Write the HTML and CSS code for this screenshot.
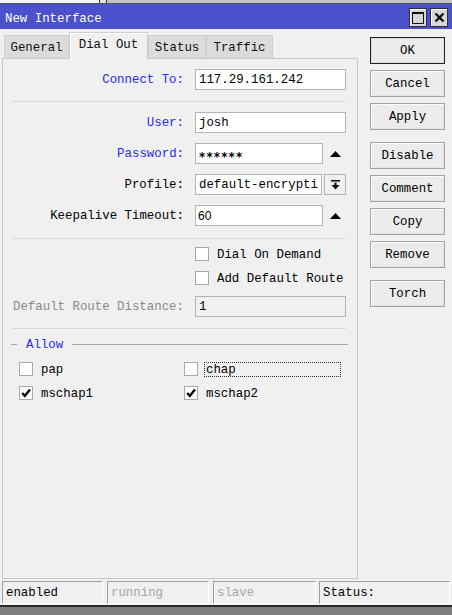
FILE: index.html
```html
<!DOCTYPE html>
<html>
<head>
<meta charset="utf-8">
<title>New Interface</title>
<link rel="stylesheet" href="styles.css">
</head>
<body>
<div class="topstrip"><div class="ts-a"></div><div class="ts-b"></div><div class="ts-c"></div></div>
<div class="titlebar">
  <span class="title">New Interface</span>
  <div class="tbtns">
    <div class="tbtn"><span class="sq"></span></div>
    <div class="tbtn"><svg width="11" height="11" viewBox="0 0 11 11"><path d="M1.5 1.5 L9.5 9.5 M9.5 1.5 L1.5 9.5" stroke="#111" stroke-width="2.4"/></svg></div>
  </div>
</div>
<div class="main">
  <div class="left">
    <div class="tabs">
      <div class="tab t-general">General</div>
      <div class="tab active">Dial Out</div>
      <div class="tab t-status">Status</div>
      <div class="tab t-traffic">Traffic</div>
    </div>
    <div class="panel">
      <div class="row r-connect"><div class="lbl blue">Connect To:</div><div class="input w-full">117.29.161.242</div></div>
      <div class="sep sep1"></div>
      <div class="row r-user"><div class="lbl blue">User:</div><div class="input w-full">josh</div></div>
      <div class="row r-pass"><div class="lbl blue">Password:</div>
        <div class="field"><div class="input w-short"><span class="stars">******</span></div><svg class="tri" width="11" height="6" viewBox="0 0 11 6"><polygon points="5.5,0 11,6 0,6" fill="#000"/></svg></div></div>
      <div class="row r-profile"><div class="lbl">Profile:</div>
        <div class="field"><div class="input w-prof">default-encrypti</div><div class="ddbtn"><svg width="9" height="10" viewBox="0 0 9 10"><rect x="0" y="0" width="9" height="1.6" fill="#111"/><rect x="3.4" y="2.6" width="2.2" height="3" fill="#111"/><polygon points="0.5,5 8.5,5 4.5,9.5" fill="#111"/></svg></div></div></div>
      <div class="row r-keep"><div class="lbl">Keepalive Timeout:</div>
        <div class="field"><div class="input w-short sans">60</div><svg class="tri" width="11" height="6" viewBox="0 0 11 6"><polygon points="5.5,0 11,6 0,6" fill="#000"/></svg></div></div>
      <div class="sep sep2"></div>
      <div class="row cbrow r-dial"><div></div><div class="cbitem"><span class="cb"></span><span class="cbtext">Dial On Demand</span></div></div>
      <div class="row cbrow r-adr"><div></div><div class="cbitem"><span class="cb"></span><span class="cbtext">Add Default Route</span></div></div>
      <div class="row r-dist"><div class="lbl gray">Default Route Distance:</div><div class="input w-full disabled">1</div></div>
      <div class="sep sep3"></div>
      <div class="legend"><span class="lg-short"></span><span class="lg-text">Allow</span><span class="lg-line"></span></div>
      <div class="allow">
        <div class="cbitem"><span class="cb"></span><span class="cbtext">pap</span></div>
        <div class="cbitem"><span class="cb"></span><span class="cbtext focus">chap</span></div>
        <div class="cbitem"><span class="cb"><svg width="12" height="12" viewBox="0 0 12 12"><path d="M2.2 6 L4.8 9 L10 2.5" fill="none" stroke="#000" stroke-width="2.4"/></svg></span><span class="cbtext">mschap1</span></div>
        <div class="cbitem"><span class="cb"><svg width="12" height="12" viewBox="0 0 12 12"><path d="M2.2 6 L4.8 9 L10 2.5" fill="none" stroke="#000" stroke-width="2.4"/></svg></span><span class="cbtext">mschap2</span></div>
      </div>
    </div>
  </div>
  <div class="buttons">
    <div class="btn default">OK</div>
    <div class="btn">Cancel</div>
    <div class="btn">Apply</div>
    <div class="btn group">Disable</div>
    <div class="btn">Comment</div>
    <div class="btn">Copy</div>
    <div class="btn">Remove</div>
    <div class="btn group">Torch</div>
  </div>
</div>
<div class="statusbar">
  <div class="cell c1">enabled</div>
  <div class="cell c2 dim">running</div>
  <div class="cell c3 dim">slave</div>
  <div class="cell c4">Status:</div>
</div>
<div class="bottomstrip"></div>
</body>
</html>
```

FILE: styles.css
```css
* { box-sizing: border-box; }
html, body { margin: 0; padding: 0; }
body {
  width: 452px;
  height: 615px;
  overflow: hidden;
  background: #f0f0f0;
  font-family: "Liberation Mono", "DejaVu Sans Mono", monospace;
  font-size: 12.4px;
  color: #000;
  display: flex;
  flex-direction: column;
}

/* strip of window behind */
.topstrip { height: 4px; display: flex; background: #cfcfcf; border-bottom: 1px solid #555; }
.ts-a { width: 100px; background: #f6f6f6; border-right: 1px solid #333; }
.ts-b { width: 7px; background: #e2e2e2; border-right: 1px solid #333; }
.ts-c { flex: 1; background: #c4c4c4; }

.titlebar {
  height: 25px;
  background: #4b50cd;
  display: flex;
  align-items: center;
  justify-content: space-between;
  padding: 0 4px 0 5px;
}
.title { color: #fff; padding-top: 4px; }
.tbtns { display: flex; gap: 3px; padding-top: 2px; }
.tbtn {
  width: 18px; height: 19px;
  background: #d8d8d8;
  border: 1px solid #303030;
  box-shadow: inset 1px 1px 0 #fff;
  display: flex; align-items: center; justify-content: center;
}
.sq { width: 12px; height: 12px; border: 1px solid #111; border-top-width: 2px; }

.main { flex: 1; display: flex; min-height: 0; }
.left { width: 356px; margin-left: 2px; display: flex; flex-direction: column; }

.tabs { height: 29px; display: flex; align-items: flex-end; padding-left: 2px; position: relative; z-index: 1; }
.tab {
  height: 23px;
  background: #dcdcdc;
  border: 1px solid #cfcfcf;
  border-bottom: none;
  display: flex; align-items: center; justify-content: center;
  color: #111;
  padding-top: 1px;
}
.t-general { width: 65px; }
.t-status { width: 58px; }
.t-traffic { width: 67px; }
.tab.active {
  width: 79px;
  height: 27px;
  margin-bottom: -1px;
  background: #f0f0f0;
  border-color: #d0d0d0;
  box-shadow: inset 1px 1px 0 #fff;
  padding-top: 0;
  padding-bottom: 3px;
}

.panel {
  flex: 1;
  border: 1px solid #c9c9c9;
  background: #f0f0f0;
  display: flex;
  flex-direction: column;
}

.row {
  display: grid;
  grid-template-columns: 181px 151px;
  column-gap: 11px;
  align-items: center;
  height: 21px;
}
.lbl { text-align: right; white-space: nowrap; padding-top: 1px; }
.blue { color: #2a2af2; }
.gray { color: #8a8a8a; }

.r-connect { margin-top: 10px; }
.r-user { margin-top: 10px; }
.r-pass { margin-top: 10px; }
.r-profile { margin-top: 10px; }
.r-keep { margin-top: 10px; }
.cbrow { height: 14px; }
.r-dial { margin-top: 8px; }
.r-adr { margin-top: 10px; }
.r-dist { margin-top: 11px; }

.sep { height: 1px; background: #d9d9d9; margin-left: 9px; width: 334px; }
.sep1 { margin-top: 11px; }
.sep2 { margin-top: 12px; }
.sep3 { margin-top: 11px; }

.input {
  height: 21px;
  background: #fff;
  border: 1px solid #b4b4b4;
  padding-left: 3px;
  padding-top: 1px;
  display: flex;
  align-items: center;
  white-space: nowrap;
  overflow: hidden;
}
.w-full { width: 151px; }
.w-short { width: 128px; }
.w-prof { width: 127px; }
.disabled { background: #f0f0f0; }
.stars {
  font-family: "DejaVu Sans", sans-serif;
  font-size: 12px;
  font-weight: bold;
  letter-spacing: 1.1px;
  padding-top: 6px;
}
.sans { font-family: "Liberation Sans", Arial, sans-serif; font-size: 12px; padding-left: 2px; }
.field { display: flex; align-items: center; width: 160px; }
.tri { margin-left: 7px; }
.ddbtn {
  width: 22px; height: 21px;
  margin-left: 2px;
  border: 1px solid #b4b4b4;
  background: #f0f0f0;
  display: flex; align-items: center; justify-content: center;
}

.cbitem { display: flex; align-items: center; height: 14px; }
.cb {
  width: 14px; height: 14px;
  flex: none;
  background: #fff;
  border: 1px solid #a8a8a8;
  display: flex; align-items: center; justify-content: center;
}
.cbtext { margin-left: 8px; white-space: nowrap; padding-top: 1px; }
.cbtext.focus {
  margin-left: 6px;
  padding-left: 1px;
  width: 137px;
  height: 15px;
  border: 1px dotted #333;
  display: flex; align-items: center;
}

.legend { display: flex; align-items: center; height: 14px; margin-top: 8px; }
.lg-short { width: 6px; height: 1px; background: #a8a8a8; margin-left: 8px; }
.lg-text { color: #2a2af2; margin-left: 9px; padding-top: 1px; }
.lg-line { width: 276px; height: 1px; background: #a8a8a8; margin-left: 9px; }

.allow {
  display: grid;
  grid-template-columns: 165px 170px;
  row-gap: 10px;
  padding-left: 16px;
  margin-top: 11px;
}

.buttons { width: 75px; margin-left: 12px; padding-top: 8px; display: flex; flex-direction: column; gap: 6px; }
.btn {
  height: 27px;
  border: 1px solid #a3a3a3;
  box-shadow: inset 1px 1px 0 #fbfbfb, inset -1px -1px 0 #e2e2e2;
  background: #ececec;
  display: flex; align-items: center; justify-content: center;
  padding-top: 1px;
}
.btn.default { border: 1px solid #222; box-shadow: inset 0 0 0 1px #dcdcdc; }
.btn.group { margin-top: 6px; }

.statusbar { height: 23px; margin-top: 2px; display: flex; padding-left: 2px; }
.cell {
  height: 23px;
  border-top: 1px solid #9d9d9d;
  border-left: 1px solid #9d9d9d;
  border-bottom: 1px solid #fff;
  border-right: 1px solid #fff;
  padding-left: 3px;
  padding-top: 1px;
  display: flex; align-items: center;
  white-space: nowrap;
}
.c1 { width: 101px; }
.c2 { width: 102px; margin-left: 4px; }
.c3 { width: 103px; margin-left: 4px; }
.c4 { width: 131px; margin-left: 3px; }
.dim { color: #a6a6a6; }

.bottomstrip { height: 10px; margin-top: 1px; background: #7d7d7d; border-top: 2px solid #2a2a2a; }
```
